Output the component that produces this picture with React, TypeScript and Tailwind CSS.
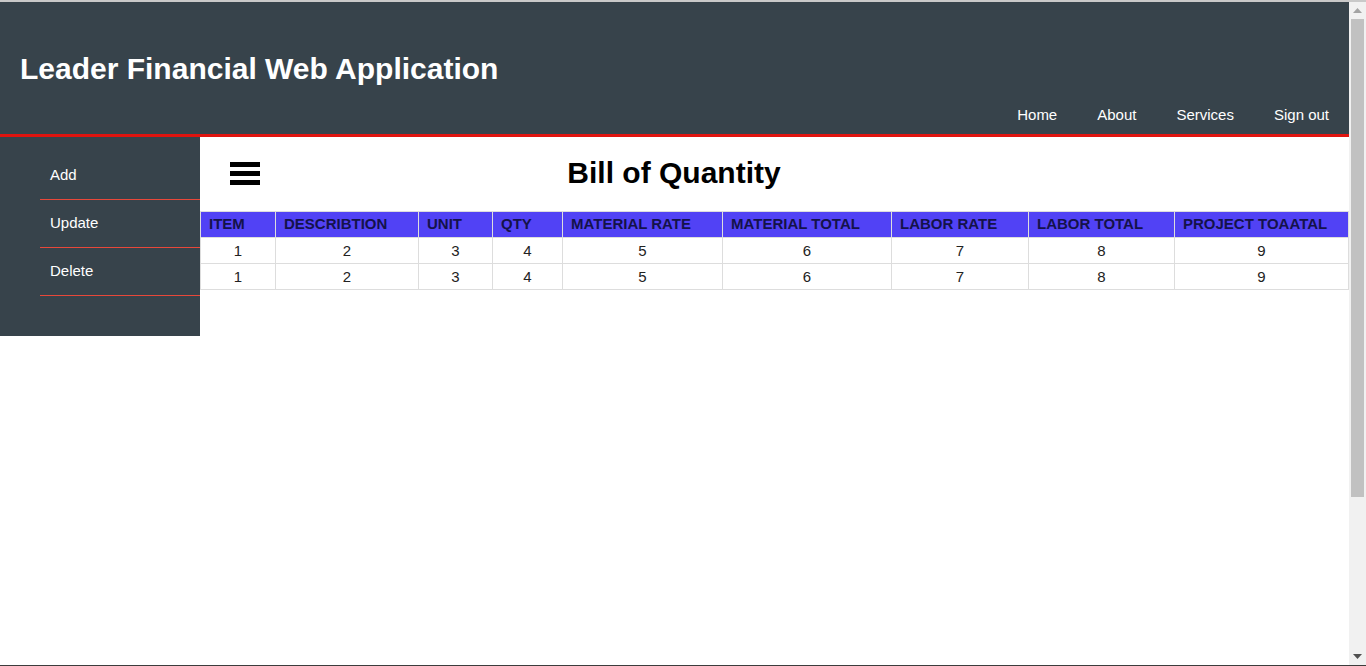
import React from 'react';

const columns = [
  { key: 'item', title: 'ITEM', width: 75 },
  { key: 'desc', title: 'DESCRIBTION', width: 143 },
  { key: 'unit', title: 'UNIT', width: 74 },
  { key: 'qty', title: 'QTY', width: 70 },
  { key: 'matRate', title: 'MATERIAL RATE', width: 160 },
  { key: 'matTotal', title: 'MATERIAL TOTAL', width: 169 },
  { key: 'labRate', title: 'LABOR RATE', width: 137 },
  { key: 'labTotal', title: 'LABOR TOTAL', width: 146 },
  { key: 'projTotal', title: 'PROJECT TOAATAL', width: 174 },
];

const rows = [
  [1, 2, 3, 4, 5, 6, 7, 8, 9],
  [1, 2, 3, 4, 5, 6, 7, 8, 9],
];

const navLinks = ['Home', 'About', 'Services', 'Sign out'];
const sideLinks = ['Add', 'Update', 'Delete'];

// browser-style scrollbar drawn on the right edge
const Scrollbar = () => (
  <div className="flex w-[17px] shrink-0 flex-col bg-[#f1f1f1]">
    <div className="flex h-[17px] items-center justify-center">
      <svg width="9" height="5" viewBox="0 0 9 5">
        <path d="M0 5 L4.5 0 L9 5 Z" fill="#a3a3a3" />
      </svg>
    </div>
    <div className="mx-[2px] h-[478px] bg-[#c1c1c1]" />
    <div className="flex-1" />
    <div className="flex h-[17px] items-center justify-center">
      <svg width="9" height="5" viewBox="0 0 9 5">
        <path d="M0 0 L9 0 L4.5 5 Z" fill="#505050" />
      </svg>
    </div>
  </div>
);

export default function App() {
  return (
    <div className="flex h-[666px] flex-col overflow-hidden bg-white font-['Liberation_Sans',Arial,sans-serif]">
      <div className="h-[2px] bg-[#c9c9c9]" />
      <div className="flex min-h-0 flex-1">
        <div className="min-w-0 flex-1">
          {/* Top header */}
          <header>
            <div className="flex h-[132px] flex-col bg-[#37434b]">
              <h1 className="mt-[50px] pl-[20px] text-[30px] font-bold leading-[34px] text-white">
                Leader Financial Web Application
              </h1>
              <nav className="mt-auto mb-[11px] flex justify-end">
                {navLinks.map((link) => (
                  <a key={link} href="#" className="px-5 text-[15px] leading-[17px] text-white">
                    {link}
                  </a>
                ))}
              </nav>
            </div>
            <div className="h-[3px] bg-[#e0140f]" />
          </header>

          <div className="flex items-start">
            {/* Side menu */}
            <aside className="w-[200px] shrink-0 bg-[#37434b] pt-[15px] pb-[40px]">
              {sideLinks.map((link) => (
                <div key={link} className="ml-[40px]">
                  <a href="#" className="flex h-[47px] items-center pl-[10px] text-[15px] text-white">
                    {link}
                  </a>
                  <div className="h-px bg-[#e8483a]" />
                </div>
              ))}
            </aside>

            {/* Content */}
            <main className="min-w-0 flex-1">
              <div className="flex h-[74px] items-start">
                <div className="mt-[25px] ml-[30px] flex w-[30px] shrink-0 flex-col gap-[4px]">
                  <span className="h-[5px] bg-black" />
                  <span className="h-[5px] bg-black" />
                  <span className="h-[5px] bg-black" />
                </div>
                <h2 className="mt-[19px] mr-[261px] flex-1 text-center text-[30px] font-bold leading-[34px] text-black">
                  Bill of Quantity
                </h2>
              </div>

              <table className="w-[1148px] table-fixed border-collapse text-[15px]">
                <colgroup>
                  {columns.map((c) => (
                    <col key={c.key} style={{ width: c.width }} />
                  ))}
                </colgroup>
                <thead>
                  <tr className="bg-[#5142f5]">
                    {columns.map((c) => (
                      <th
                        key={c.key}
                        className="h-[26px] border border-[#dddddd] px-[8px] pb-[2px] text-left font-bold leading-[18px] text-[#14124a]"
                      >
                        {c.title}
                      </th>
                    ))}
                  </tr>
                </thead>
                <tbody>
                  {rows.map((row, i) => (
                    <tr key={i}>
                      {row.map((v, j) => (
                        <td
                          key={j}
                          className="h-[26px] border border-[#dddddd] px-[8px] text-center leading-[18px] text-[#222222]"
                        >
                          {v}
                        </td>
                      ))}
                    </tr>
                  ))}
                </tbody>
              </table>
            </main>
          </div>
        </div>
        <Scrollbar />
      </div>
      <div className="h-px bg-[#3c3c3c]" />
    </div>
  );
}
